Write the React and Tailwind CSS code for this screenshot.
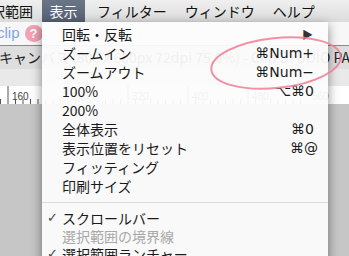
import React from 'react';

const jp = { fontFamily: '"Noto Sans CJK JP", "Liberation Sans", sans-serif' };
const key = { fontFamily: '"DejaVu Sans", "Liberation Sans", sans-serif' };

const items = [
    { label: '回転・反転', sub: true },
    { label: 'ズームイン', sc: '⌘Num+' },
    { label: 'ズームアウト', sc: '⌘Num−' },
    { label: '100%', sc: '⌥⌘0' },
    { label: '200%' },
    { label: '全体表示', sc: '⌘0' },
    { label: '表示位置をリセット', sc: '⌘@' },
    { label: 'フィッティング' },
    { label: '印刷サイズ' },
];

const toggles = [
    { label: 'スクロールバー', checked: true },
    { label: '選択範囲の境界線', disabled: true },
    { label: '選択範囲ランチャー', checked: true },
];

const Ruler = () => {
    // major tick every 60px, minor every 7.5px
    const ticks = [];
    for (let i = 0; i < 48; i++) {
        const x = 8 + i * 7.5 - 60;
        const major = i % 8 === 0;
        ticks.push(<line key={i} x1={x} x2={x} y1={major ? 0 : 13} y2={18} stroke="#555" strokeWidth="1" />);
    }
    const labels = [80, 160, 240, 320, 400, 480, 560];
    return (
        <svg width="349" height="18" className="block">
            {ticks}
            {labels.map((n, i) => (
                <text key={n} x={-52 + i * 60 + 4} y="14" fontSize="10" fill="#444" fontFamily="Liberation Sans, sans-serif">{n}</text>
            ))}
        </svg>
    );
};

export default function App() {
    return (
        <div className="relative w-[349px] h-[256px] overflow-hidden bg-[#c6c6c6] flex flex-col" style={jp}>
            {/* menu bar */}
            <div className="h-[22px] flex items-center bg-gradient-to-b from-[#efefef] to-[#dcdcdc] text-[14px] text-[#111] whitespace-nowrap shrink-0">
                <span className="w-[42px] flex justify-end pr-[9px]">選択範囲</span>
                <span className="h-full w-[43px] flex items-center justify-center bg-gradient-to-b from-[#6a7686] to-[#556173] text-white">表示</span>
                <span className="ml-[12px]">フィルター</span>
                <span className="ml-[18px]">ウィンドウ</span>
                <span className="ml-[18px]">ヘルプ</span>
            </div>
            {/* toolbar */}
            <div className="h-[24px] flex items-center bg-[#f7f7f7] border-b border-[#8a8a8a] shrink-0">
                <span className="-ml-[3px] text-[15px] text-[#7fa6e0]" style={{ fontFamily: 'Liberation Sans, sans-serif' }}>clip</span>
                <span className="ml-[5px] w-[18px] h-[17px] rounded-full bg-[#f2a0b4] text-white text-[13px] font-bold flex items-center justify-center" style={{ fontFamily: 'Liberation Sans, sans-serif' }}>?</span>
            </div>
            {/* document tab */}
            <div className="h-[23px] flex items-center bg-[#dedede] text-[14px] text-[#222] whitespace-nowrap shrink-0">
                <span className="-ml-[1px]">キャンバス (800 x 600px 72dpi 75.0%) - Clip STUDIO PAINT</span>
            </div>
            <div className="h-[17px] bg-[#e9e9e9] shrink-0" />
            {/* ruler */}
            <div className="h-[18px] bg-white shrink-0">
                <Ruler />
            </div>
            <div className="flex-1 bg-[#c6c6c6]" />

            {/* dropdown */}
            <div className="absolute left-[42px] top-[22px] w-[286px] h-[240px] bg-[#fcfcfc]/[0.94] shadow-[0_3px_10px_rgba(0,0,0,0.45)] pt-[3px] text-[14px] text-[#1a1a1a]">
                {items.map((it) => (
                    <div key={it.label} className="h-[19px] flex items-center pl-[20px] pr-[14px]">
                        <span className="flex-1">{it.label}</span>
                        {it.sub && <span className="text-[11px] text-[#333] mr-[1px]">▶</span>}
                        {it.sc && (
                            <span className={it.sc === '⌘@' ? '-mr-[4px] text-[14px]' : 'text-[14px]'} style={key}>{it.sc}</span>
                        )}
                    </div>
                ))}
                <div className="h-[13px] flex items-center">
                    <div className="w-full h-px bg-[#dcdcdc]" />
                </div>
                {toggles.map((t) => (
                    <div key={t.label} className={'h-[18px] flex items-center ' + (t.disabled ? 'text-[#a8a8a8]' : '')}>
                        <span className="w-[20px] pl-[5px] text-[13px] text-[#444]" style={key}>{t.checked ? '✓' : ''}</span>
                        <span>{t.label}</span>
                    </div>
                ))}
            </div>

            {/* pink annotation ellipse */}
            <svg className="absolute left-0 top-0 pointer-events-none" width="349" height="256">
                <ellipse cx="276" cy="63" rx="65" ry="25" transform="rotate(-6 276 63)" fill="none" stroke="#ef7d93" strokeOpacity="0.85" strokeWidth="2" />
            </svg>
        </div>
    );
}
